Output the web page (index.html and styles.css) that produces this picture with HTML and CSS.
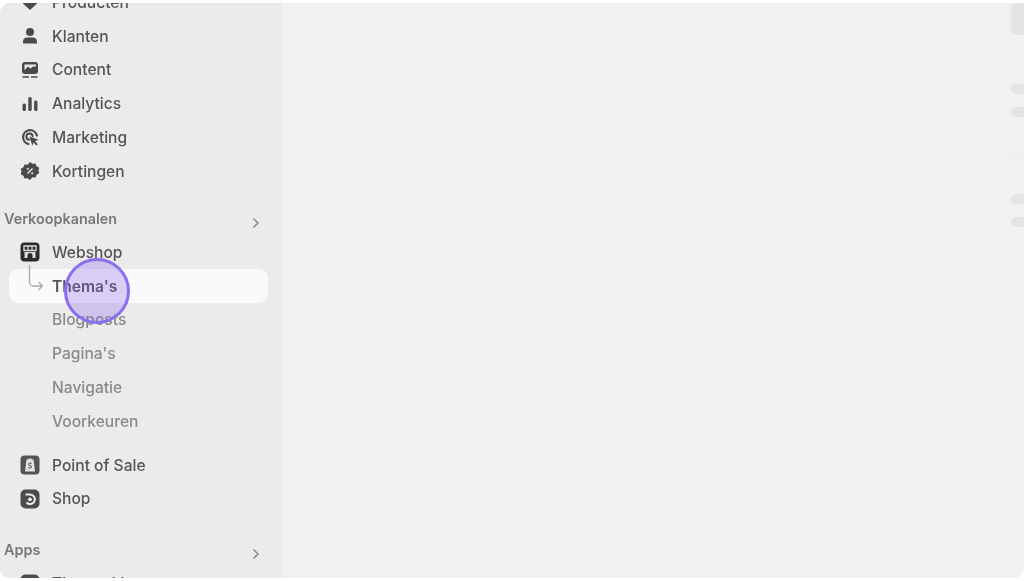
FILE: index.html
```html
<!DOCTYPE html>
<html lang="nl">
<head>
  <meta charset="UTF-8">
  <meta name="viewport" content="width=device-width, initial-scale=1.0">
  <title>Thema's</title>
  <link rel="stylesheet" href="styles.css">
</head>
<body>
  <div class="frame">
    <aside class="sidebar">
      <nav class="nav">
        <a class="nav-item">
          <svg class="icon" viewBox="0 0 20 20"><path d="M3 3h14v7.500l-7 6.500-7-6.500z" fill="#4a4a4a"/></svg>
          <span>Producten</span>
        </a>
        <a class="nav-item">
          <svg class="icon" viewBox="0 0 20 20"><circle cx="10" cy="6" r="4" fill="#4a4a4a"/><path d="M3 17.500v-2c0-2.600 2-4 4.200-4h5.600c2.200 0 4.200 1.400 4.200 4v2z" fill="#4a4a4a"/></svg>
          <span>Klanten</span>
        </a>
        <a class="nav-item">
          <svg class="icon" viewBox="0 0 20 20"><rect x="2" y="2" width="16" height="12" rx="3" fill="#4a4a4a"/><path d="M4.500 10 8 6.500l2.500 2 2.500-2h3V4.500H4.500z" fill="#ebebeb"/><path d="M2.500 17h6.500M11 17h6.500" stroke="#4a4a4a" stroke-width="1.500"/></svg>
          <span>Content</span>
        </a>
        <a class="nav-item">
          <svg class="icon" viewBox="0 0 20 20"><rect x="2.500" y="9.500" width="3.400" height="7.500" rx="1.500" fill="#4a4a4a"/><rect x="8.300" y="3" width="3.400" height="14" rx="1.500" fill="#4a4a4a"/><rect x="14.100" y="6.500" width="3.400" height="10.500" rx="1.500" fill="#4a4a4a"/></svg>
          <span>Analytics</span>
        </a>
        <a class="nav-item">
          <svg class="icon" viewBox="0 0 20 20"><path d="M8.500 17a7 7 0 1 1 8.400-8.400" fill="none" stroke="#4a4a4a" stroke-width="2.200" stroke-linecap="round"/><path d="M9 12.800a3.200 3.200 0 1 1 3.700-3.700" fill="none" stroke="#4a4a4a" stroke-width="2" stroke-linecap="round"/><path d="M9.500 9.500l9 3.200-3.400 1.500 2.700 3-1.400 1.300-2.800-3-1.300 3.200z" fill="#4a4a4a"/></svg>
          <span>Marketing</span>
        </a>
        <a class="nav-item">
          <svg class="icon" viewBox="0 0 20 20"><path d="M10 1l2.500 1.800 3-.4 1.100 2.900 2.700 1.400-.8 2.800.8 2.800-2.700 1.400-1.100 2.900-3-.4L10 19l-2.500-1.800-3 .4-1.100-2.900-2.700-1.400.8-2.800-.8-2.800 2.700-1.400 1.100-2.900 3 .4z" fill="#4a4a4a"/><path d="M7.500 12.500l5-5" stroke="#ebebeb" stroke-width="1.400"/><circle cx="7.800" cy="7.800" r="1" fill="#ebebeb"/><circle cx="12.200" cy="12.200" r="1" fill="#ebebeb"/></svg>
          <span>Kortingen</span>
        </a>
      </nav>

      <div class="section-head">
        <span>Verkoopkanalen</span>
        <svg class="chevron" viewBox="0 0 10 12"><path d="M2.500 1.500 7 6l-4.500 4.500" fill="none" stroke="#8a8a8a" stroke-width="1.500"/></svg>
      </div>
      <nav class="nav">
        <a class="nav-item">
          <svg class="icon" viewBox="0 0 20 20"><rect x="0.500" y="0.500" width="19" height="19" rx="4" fill="#2b2b2b"/><path d="M4 4h12v4.500H4z" fill="none" stroke="#ddd" stroke-width="1.300"/><path d="M8 4v4.500M12 4v4.500" stroke="#ddd" stroke-width="1.200"/><path d="M4.500 10h11v6h-11z" fill="#ddd"/><path d="M7.500 16v-2.500a2.500 2.500 0 0 1 5 0V16z" fill="#2b2b2b"/></svg>
          <span>Webshop</span>
        </a>
        <a class="nav-item nav-item-active">
          <svg class="connector" viewBox="0 0 16 28"><path d="M1.500 0v17a4 4 0 0 0 4 4h9M10.500 17l4 4-4 4" fill="none" stroke="#a8a8a8" stroke-width="1.300"/></svg>
          <span class="icon-space"></span>
          <span>Thema's</span>
        </a>
        <a class="nav-item nav-sub"><span class="icon-space"></span><span>Blogposts</span></a>
        <a class="nav-item nav-sub"><span class="icon-space"></span><span>Pagina's</span></a>
        <a class="nav-item nav-sub"><span class="icon-space"></span><span>Navigatie</span></a>
        <a class="nav-item nav-sub"><span class="icon-space"></span><span>Voorkeuren</span></a>
      </nav>

      <nav class="nav nav-channels">
        <a class="nav-item">
          <svg class="icon" viewBox="0 0 20 20"><rect x="0.500" y="0.500" width="19" height="19" rx="4" fill="#555"/><path d="M6.500 4.500h7l1.500 12H5z" fill="#e4e4e4"/><path d="M8 6c0-3 4-3 4 0" fill="none" stroke="#e4e4e4" stroke-width="1.200"/><path d="M11.500 8.500c-1-.8-3-.4-2.800 1 .2 1.200 2.600 1 2.600 2.400 0 1.300-2 1.500-3 .6" fill="none" stroke="#555" stroke-width="1.100"/></svg>
          <span>Point of Sale</span>
        </a>
        <a class="nav-item">
          <svg class="icon" viewBox="0 0 20 20"><rect x="0.500" y="0.500" width="19" height="19" rx="5" fill="#4c4c4c"/><path d="M5.500 5.500h4.500a4.800 4.800 0 1 1-3.500 8" fill="none" stroke="#ececec" stroke-width="2"/><circle cx="10" cy="10.300" r="1.900" fill="#ececec"/></svg>
          <span>Shop</span>
        </a>
      </nav>

      <div class="section-head section-apps">
        <span>Apps</span>
        <svg class="chevron" viewBox="0 0 10 12"><path d="M2.500 1.500 7 6l-4.500 4.500" fill="none" stroke="#8a8a8a" stroke-width="1.500"/></svg>
      </div>
      <nav class="nav">
        <a class="nav-item">
          <svg class="icon" viewBox="0 0 20 20"><rect x="0.500" y="0.500" width="19" height="19" rx="5" fill="#4c4c4c"/></svg>
          <span>Tinycookie</span>
        </a>
      </nav>
    </aside>

    <main class="main">
      <div class="skeleton">
        <div class="sk-block"></div>
        <div class="sk-line sk-first"></div>
        <div class="sk-line"></div>
        <div class="sk-rule"></div>
        <div class="sk-line"></div>
        <div class="sk-line"></div>
      </div>
    </main>

    <div class="click-marker"></div>
  </div>
</body>
</html>
```

FILE: styles.css
```css
html, body {
  margin: 0;
  padding: 0;
  height: 100%;
  overflow: hidden;
  background: #fff;
  font-family: Inter, "Liberation Sans", sans-serif;
}

.frame {
  position: relative;
  height: 575px;
  margin-top: 3px;
  display: flex;
  overflow: hidden;
  background: #f1f1f1;
  border-radius: 10px 0 10px 10px;
}

.sidebar {
  width: 282px;
  flex-shrink: 0;
  background: #ebebeb;
  overflow: hidden;
  filter: blur(0.6px);
}

.nav {
  display: flex;
  flex-direction: column;
}

.sidebar > .nav:first-child {
  margin-top: -17.250px;
}

.nav-item {
  position: relative;
  display: flex;
  align-items: center;
  gap: 12px;
  height: 33.700px;
  padding-left: 20px;
  font-size: 15.600px;
  font-weight: 500;
  color: #555;
}

.icon {
  width: 20px;
  height: 20px;
  flex-shrink: 0;
}

.icon-space {
  width: 20px;
  flex-shrink: 0;
}

.nav-item-active {
  margin: 0.300px 14px 0 9px;
  padding-left: 11px;
  background: #fafafa;
  border-radius: 9px;
  font-weight: 600;
  color: #555;
}

.connector {
  position: absolute;
  left: 19px;
  top: -4px;
  width: 16px;
  height: 28px;
}

.nav-sub {
  color: #8a8a8a;
}

.nav-channels {
  margin-top: 10.500px;
}

.section-head {
  display: flex;
  align-items: center;
  justify-content: space-between;
  height: 34px;
  margin-top: 13.600px;
  padding: 0 21.500px 0 4px;
  font-size: 14.400px;
  font-weight: 600;
  color: #777;
}

.section-apps {
  margin-top: 17px;
}

.chevron {
  width: 10px;
  height: 12px;
  margin-top: 9px;
}

.main {
  flex: 1;
  display: flex;
  justify-content: flex-end;
  filter: blur(0.5px);
}

.skeleton {
  width: 13px;
  display: flex;
  flex-direction: column;
}

.sk-block {
  height: 32px;
  background: #e4e4e4;
  border-radius: 6px 0 0 6px;
}

.sk-line {
  height: 10px;
  margin-top: 13px;
  background: #e4e4e4;
  border-radius: 5px 0 0 5px;
}

.sk-first {
  margin-top: 49px;
}

.sk-rule {
  height: 1px;
  margin: 37px 0 39px;
  background: #ebebeb;
}

.sk-rule + .sk-line {
  margin-top: 0;
}

.click-marker {
  position: absolute;
  left: 64px;
  top: 255px;
  width: 66px;
  height: 66px;
  box-sizing: border-box;
  border: 3px solid #8a6ef0;
  border-radius: 50%;
  background: rgba(128, 90, 240, 0.27);
}
```
